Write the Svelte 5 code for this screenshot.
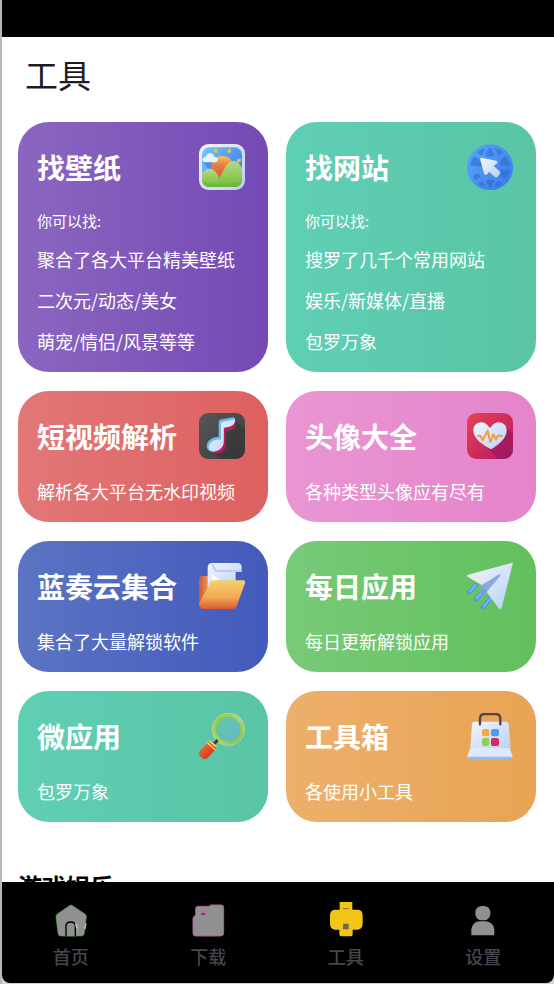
<script lang="ts">
  type Tool = { title: string; icon: string; tone: string; hint?: string; lines: string[] };

  const tools: Tool[] = [
    {
      title: '找壁纸',
      icon: 'wallpaper',
      tone: 'purple',
      hint: '你可以找:',
      lines: ['聚合了各大平台精美壁纸', '二次元/动态/美女', '萌宠/情侣/风景等等'],
    },
    {
      title: '找网站',
      icon: 'globe',
      tone: 'teal',
      hint: '你可以找:',
      lines: ['搜罗了几千个常用网站', '娱乐/新媒体/直播', '包罗万象'],
    },
    { title: '短视频解析', icon: 'music', tone: 'red', lines: ['解析各大平台无水印视频'] },
    { title: '头像大全', icon: 'heart', tone: 'pink', lines: ['各种类型头像应有尽有'] },
    { title: '蓝奏云集合', icon: 'folder', tone: 'blue', lines: ['集合了大量解锁软件'] },
    { title: '每日应用', icon: 'plane', tone: 'green', lines: ['每日更新解锁应用'] },
    { title: '微应用', icon: 'search', tone: 'teal', lines: ['包罗万象'] },
    { title: '工具箱', icon: 'toolbox', tone: 'orange', lines: ['各使用小工具'] },
  ];

  const tabs = [
    { id: 'home', label: '首页' },
    { id: 'download', label: '下载' },
    { id: 'tools', label: '工具' },
    { id: 'settings', label: '设置' },
  ];

  let active = $state('tools');
</script>

<!-- shared gradients for the card icons -->
<svg class="defs" aria-hidden="true">
  <defs>
    <linearGradient id="sky" x1="0" y1="0" x2="1" y2="0.6">
      <stop offset="0" stop-color="#72c8fa" /><stop offset="1" stop-color="#4283f0" />
    </linearGradient>
    <linearGradient id="hill" x1="0" y1="0" x2="0" y2="1">
      <stop offset="0" stop-color="#b5da86" /><stop offset="1" stop-color="#75bd38" />
    </linearGradient>
    <linearGradient id="sun" x1="0" y1="0" x2="0" y2="1">
      <stop offset="0" stop-color="#ffc64e" /><stop offset="0.35" stop-color="#e88445" /><stop offset="1" stop-color="#d95632" />
    </linearGradient>
    <linearGradient id="ice" x1="0" y1="0" x2="1" y2="1">
      <stop offset="0" stop-color="#f4f7ff" /><stop offset="1" stop-color="#b8d0f4" />
    </linearGradient>
    <linearGradient id="ball" x1="0" y1="0" x2="1" y2="0.8">
      <stop offset="0" stop-color="#58a9fa" /><stop offset="1" stop-color="#3e7be9" />
    </linearGradient>
    <linearGradient id="slate" x1="0" y1="0" x2="1" y2="1">
      <stop offset="0" stop-color="#575757" /><stop offset="1" stop-color="#3b3b3b" />
    </linearGradient>
    <linearGradient id="rose" x1="0" y1="0" x2="1" y2="1">
      <stop offset="0" stop-color="#e8434f" /><stop offset="1" stop-color="#b41867" />
    </linearGradient>
    <linearGradient id="amber" x1="0" y1="0" x2="0" y2="1">
      <stop offset="0" stop-color="#f6d070" /><stop offset="0.6" stop-color="#f1a951" /><stop offset="1" stop-color="#db5b34" />
    </linearGradient>
    <linearGradient id="rust" x1="0" y1="0" x2="1" y2="0">
      <stop offset="0" stop-color="#d15834" /><stop offset="1" stop-color="#f3a953" />
    </linearGradient>
    <linearGradient id="ring" x1="0" y1="0" x2="1" y2="1">
      <stop offset="0" stop-color="#8ac850" /><stop offset="0.5" stop-color="#a9d47a" /><stop offset="1" stop-color="#85bd58" />
    </linearGradient>
    <linearGradient id="lens" x1="0" y1="0" x2="1" y2="1">
      <stop offset="0" stop-color="#62c9a8" /><stop offset="1" stop-color="#66b6cb" />
    </linearGradient>
    <linearGradient id="handle" x1="0" y1="0" x2="1" y2="1">
      <stop offset="0" stop-color="#f27a32" /><stop offset="1" stop-color="#c92a20" />
    </linearGradient>
  </defs>
</svg>

{#snippet toolIcon(name: string)}
  <svg class="icon" viewBox="27 27 138 138" aria-hidden="true">
    {#if name === 'wallpaper'}
      <rect x="27" y="27" width="138" height="138" rx="29" fill="url(#ice)" />
      <rect x="36" y="37" width="120" height="119" rx="22" fill="url(#sky)" />
      <path d="M38 82 62 108 82 90 62 78z" fill="#3f82d8" opacity=".7" />
      <circle cx="97" cy="97" r="34" fill="url(#sun)" />
      <ellipse cx="77" cy="47" rx="5" ry="7" fill="#f6b94d" transform="rotate(-18 77 47)" />
      <ellipse cx="118" cy="47" rx="5" ry="7" fill="#f6b94d" transform="rotate(18 118 47)" />
      <ellipse cx="147" cy="76" rx="7" ry="5" fill="#f6b94d" transform="rotate(-18 147 76)" />
      <path d="M36 115c8-12 22-18 34-10 8 5 14 13 17 22v29H58c-13 0-22-10-22-22z" fill="url(#hill)" />
      <path d="M74 154 108 93c9-15 25-20 37-9 5 5 8 10 11 16v34c0 13-9 22-22 22H70z" fill="url(#hill)" />
      <path d="M36 137c20 12 100 12 120 0-1 12-10 19-22 19H58c-12 0-21-7-22-19z" fill="#579f32" opacity=".25" />
      <path d="M47 82c-13 0-12-18 1-17 3-15 23-14 24 0 15-1 14 17 2 17z" fill="#e9f2ff" />
    {:else if name === 'globe'}
      <circle cx="96" cy="97" r="69" fill="url(#ball)" />
      <g fill="#2967cb" opacity=".5">
        <path d="M58 51c8-7 16-10 24-11-5 7-8 14-10 22-6-2-11-6-14-11z" />
        <path d="M83 62c2-9 6-18 13-25 7 7 11 15 13 25-8 2-17 2-26 0z" />
        <path d="M110 40c9 1 17 4 24 11-3 5-8 9-14 11-2-8-5-15-10-22z" />
        <path d="M51 92c1-8 4-14 8-19l13 7v15z" />
        <path d="M128 92c0-6-1-12-2-18 6-3 12-6 16-10 8 8 13 18 14 28z" />
        <path d="M36 92c1-10 6-20 14-28 5 4 9 7 15 10l-2 18z" />
        <path d="M48 119c5-3 10-3 17 0l3 8c-6 2-11 5-14 9-5-5-8-10-6-17z" />
        <path d="M128 104h28c-1 10-6 19-14 27-4-4-9-7-15-9z" />
        <path d="M60 146c4-4 9-7 14-8 2 7 6 13 10 18-9-2-17-5-24-10z" />
        <path d="M83 136c9-2 17-2 26 0-2 9-7 17-13 24-6-7-10-15-13-24z" />
        <path d="M109 156c4-6 7-12 9-18 6 1 11 4 15 8-7 5-15 8-24 10z" />
      </g>
      <path d="M74 69c-5-2-8 1-7 6l11 40c1 6 7 6 10 2l5-7 17 15c3 3 7 2 9 0l6-8c3-3 2-6-1-9l-17-15 9-7c4-3 3-8-1-9z" fill="url(#ice)" />
    {:else if name === 'music'}
      <rect x="27" y="27" width="138" height="138" rx="27" fill="url(#slate)" />
      <path d="m136 49 29 28v61c0 15-12 27-27 27H92l-22-21z" fill="#353535" opacity=".6" />
      <path d="M93 55c1-5 4-7 9-8l34-4c3 10 2 27-6 32-7 4-15 2-22 5l-1 45c-1 23-32 29-45 15-10-13 2-28 15-30l13-3z" fill="#bc185e" />
      <path d="M86 54c1-5 4-7 9-8l33-6c7-1 8 4 7 9-1 15-10 20-34 22v42c0 17-16 29-33 30-20 1-23-22-10-34 8-8 17-11 28-10z" fill="#65b9f7" />
      <path d="M93 60c0-4 2-6 6-7l36-7c0 16-9 23-34 25v42c0 18-14 28-29 29-22 1-19-23-3-31 7-4 16-5 24-4z" fill="url(#ice)" />
    {:else if name === 'heart'}
      <rect x="27" y="27" width="138" height="138" rx="28" fill="url(#rose)" />
      <path d="m140 65 25 25v47c0 16-12 28-28 28h-16l-32-32z" fill="#92155d" opacity=".55" />
      <path d="M96 134C76 124 46 105 46 79c0-27 34-33 47-10 2 3 3 3 6 0 13-23 47-17 47 10 0 26-30 47-44 55-2 1-4 1-6 0z" fill="url(#ice)" />
      <path d="M58 96h10l6 13 15-29 8 34 9-23 8 15 6-11h13" fill="none" stroke="#f19b3d" stroke-width="6" stroke-linejoin="round" />
    {:else if name === 'folder'}
      <path d="M38 66h25v90H39c-7 0-12-5-12-12V77c0-6 5-11 11-11z" fill="url(#rust)" />
      <path d="M53 41c0-9 5-14 13-14h78c7 0 11 6 11 12v15h-18v50H53z" fill="url(#ice)" />
      <path d="M57 28c6 0 10 4 11 11 1 9 7 15 17 15h70v-6H85c-9 0-10-8-13-15-2-4-7-6-15-5z" fill="#b7cfe9" />
      <path d="m65 58 29 25H65z" fill="#fff" opacity=".8" />
      <path d="M71 79h88c5 0 8 4 6 9l-25 69c-2 5-6 8-12 8H42c-9 0-15-7-15-16l33-62c2-5 6-8 11-8z" fill="url(#amber)" />
    {:else if name === 'plane'}
      <path d="m52 94-18 20M71 117l-17 18M99 133l-24 26" stroke="#4597ed" stroke-width="13" stroke-linecap="round" fill="none" />
      <path d="m52 94-16 18M71 117l-15 16M99 133l-22 24" stroke="#74b4fa" stroke-width="7" stroke-linecap="round" fill="none" />
      <path d="M164 30c1-3 0-4-4-3L30 62c-4 1-4 5 0 7l41 24-2 45 17-24 36 49c4 4 8 3 9-2z" fill="url(#ice)" />
      <path d="m71 93 52-32c6-2 5 4 1 8L86 114l-17 24c-1-15-3-34 2-45z" fill="#8ba9dc" />
      <path d="m69 138 2-38 14 14z" fill="#6c93d8" opacity=".65" />
    {:else if name === 'search'}
      <circle cx="115" cy="76" r="38" fill="url(#lens)" />
      <circle cx="115" cy="76" r="43" fill="none" stroke="url(#ring)" stroke-width="14" />
      <circle cx="115" cy="76" r="48" fill="none" stroke="#c1e59a" stroke-width="3" opacity=".6" />
      <circle cx="115" cy="76" r="37" fill="none" stroke="#7fbf40" stroke-width="2" />
      <path d="m71 121 12-13" stroke="#294b44" stroke-width="9" />
      <path d="m52 117-21 22c-6 6-5 13 0 18l5 5c5 5 13 4 18-1l22-24c4-5 3-10-1-14l-8-8c-5-4-10-3-15 2z" fill="url(#handle)" />
      <path d="m52 116 24 22M58 110l22 19" stroke="#fbc868" stroke-width="5" />
    {:else if name === 'toolbox'}
      <path d="M49 53h96c4 0 7 3 7 7l6 74H37l5-74c0-4 3-7 7-7z" fill="url(#ice)" />
      <path d="M37 132h118l8 22c2 7-3 11-8 11H37c-7 0-11-5-8-12z" fill="#dce9fc" />
      <path d="M29 158h134c-1 5-3 7-8 7H37c-5 0-8-2-8-7z" fill="#9abced" />
      <path d="M66 61V44c0-9 6-14 14-14h33c8 0 14 5 14 14v17" fill="none" stroke="#4a4746" stroke-width="7" stroke-linecap="round" />
      <rect x="72" y="75" width="22" height="22" rx="6" fill="#f3aa46" />
      <rect x="99" y="75" width="24" height="22" rx="6" fill="#4d9bf4" />
      <rect x="72" y="102" width="22" height="24" rx="6" fill="#8bcf54" />
      <rect x="99" y="102" width="24" height="24" rx="6" fill="#d42b57" />
    {/if}
  </svg>
{/snippet}

{#snippet tabIcon(name: string)}
  <svg class="tab-icon" viewBox="0 0 108 108" aria-hidden="true">
    {#if name === 'home'}
      <path d="M49 11q5-4 10 0l37 25q5 4 4 10l-6 47q-1 9-9 9H23q-7 0-8-9L9 46q-1-6 4-10z" fill="#909090" stroke="#48a33e" stroke-width="2" />
      <path d="M39 103V73c0-8 5-13 14-13s14 5 14 13v30" fill="#909090" stroke="#000" stroke-width="4" />
      <path d="m66 62 8 7v14l-6-8z" fill="#a9d89f" />
      <path d="m99 64-4 17" stroke="#a9d89f" stroke-width="4" />
    {:else if name === 'download'}
      <path d="M17 20q0-7 8-7h32l5-4h32q7 0 7 8v76q0 9-9 9H16q-7 0-7-8V49q0-6 8-9z" fill="#909090" stroke="#bd579e" stroke-width="3" />
      <path d="M32 28h24l-10 8H35z" fill="#cb65ad" />
      <path d="M33 36h13" stroke="#222" stroke-width="3" />
    {:else if name === 'tools'}
      <path d="M35 0h38v23h17q14 0 14 19v21q0 19-15 20H74v14q0 6-5 6H39q-4 0-5-6V83H20Q6 82 6 64V41q0-17 14-18h15z" fill="#f3c615" />
      <path d="M44 20h18" stroke="#777548" stroke-width="3" />
      <path d="M46 65h16v17H44z" fill="#6b6757" />
    {:else}
      <rect x="31" y="12" width="45" height="43" rx="19" fill="#909090" />
      <path d="M19 100V85c0-17 13-27 26-27h17c13 0 26 11 26 27v15z" fill="#909090" />
    {/if}
  </svg>
{/snippet}

<div class="app">
  <div class="status-bar"></div>

  <main>
    <h1>工具</h1>

    <div class="cards">
      {#each tools as tool}
        <a class="card {tool.tone}" href="#{tool.icon}">
          <div class="card-head">
            <h2>{tool.title}</h2>
            {@render toolIcon(tool.icon)}
          </div>
          {#if tool.hint}
            <p class="hint">{tool.hint}</p>
          {/if}
          {#each tool.lines as line}
            <p>{line}</p>
          {/each}
        </a>
      {/each}
    </div>

    <h3>游戏娱乐</h3>
  </main>

  <nav>
    {#each tabs as tab}
      <button type="button" aria-pressed={active === tab.id} onclick={() => (active = tab.id)}>
        {@render tabIcon(tab.id)}
        <span>{tab.label}</span>
      </button>
    {/each}
  </nav>
</div>

<style>
  :global(body) {
    background: #d2d2d2;
    font-family: 'Noto Sans CJK SC', sans-serif;
  }

  .defs {
    position: absolute;
    width: 0;
    height: 0;
  }

  .app {
    box-sizing: border-box;
    display: flex;
    flex-direction: column;
    height: 100vh;
    padding-bottom: 1px;
    border-left: 2px solid #b8b8b8;
  }

  .status-bar {
    flex: none;
    height: 37px;
    background: #000;
  }

  main {
    flex: 1;
    min-height: 0;
    padding: 0 18px 0 16px;
    background: #fff;
    overflow: auto;
    scrollbar-width: none;
  }

  h1 {
    margin: 0;
    padding: 13px 7px 24px;
    font-size: 33px;
    font-weight: 400;
    line-height: 48px;
    color: #1c1b1f;
  }

  .cards {
    display: grid;
    grid-template-columns: 1fr 1fr;
    gap: 19px 18px;
  }

  .card {
    box-sizing: border-box;
    padding: 22px 19px 10px;
    border-radius: 31px;
    color: #fff;
    text-decoration: none;
  }

  .purple {
    background: linear-gradient(90deg, #8b66c0, #744ab5);
  }

  .teal {
    background: linear-gradient(90deg, #5fcfb4, #5ac4a5);
  }

  .red {
    background: linear-gradient(90deg, #e27777, #de6060);
  }

  .pink {
    background: linear-gradient(90deg, #e996d3, #e584cb);
  }

  .blue {
    background: linear-gradient(90deg, #5c74c3, #425abb);
  }

  .green {
    background: linear-gradient(90deg, #78ca77, #62c05d);
  }

  .orange {
    background: linear-gradient(90deg, #ecb06c, #e9a353);
  }

  .card-head {
    display: flex;
    align-items: center;
    justify-content: space-between;
    height: 46px;
    padding-right: 4px;
    margin-bottom: 12px;
  }

  h2 {
    margin: 0;
    font-size: 28px;
    font-weight: 700;
    line-height: 46px;
    white-space: nowrap;
  }

  .icon {
    flex: none;
    width: 46px;
    height: 46px;
  }

  p {
    margin: 0;
    font-size: 18px;
    line-height: 41px;
    white-space: nowrap;
  }

  .hint {
    padding-top: 1px;
    font-size: 15px;
    line-height: 36px;
  }

  h3 {
    margin: 0;
    padding-top: 46px;
    font-size: 24px;
    font-weight: 700;
    line-height: 36px;
    color: #000;
  }

  nav {
    flex: none;
    display: grid;
    grid-template-columns: repeat(4, 1fr);
    height: 101px;
    padding-right: 2px;
    background: #000;
    border-radius: 0 0 8px 8px;
  }

  button {
    display: flex;
    flex-direction: column;
    align-items: center;
    padding: 20px 0 0;
    border: 0;
    background: none;
    font-family: inherit;
    font-size: 18px;
    font-weight: 500;
    line-height: 36px;
    color: #49454f;
    cursor: pointer;
  }

  .tab-icon {
    width: 36px;
    height: 36px;
  }
</style>
